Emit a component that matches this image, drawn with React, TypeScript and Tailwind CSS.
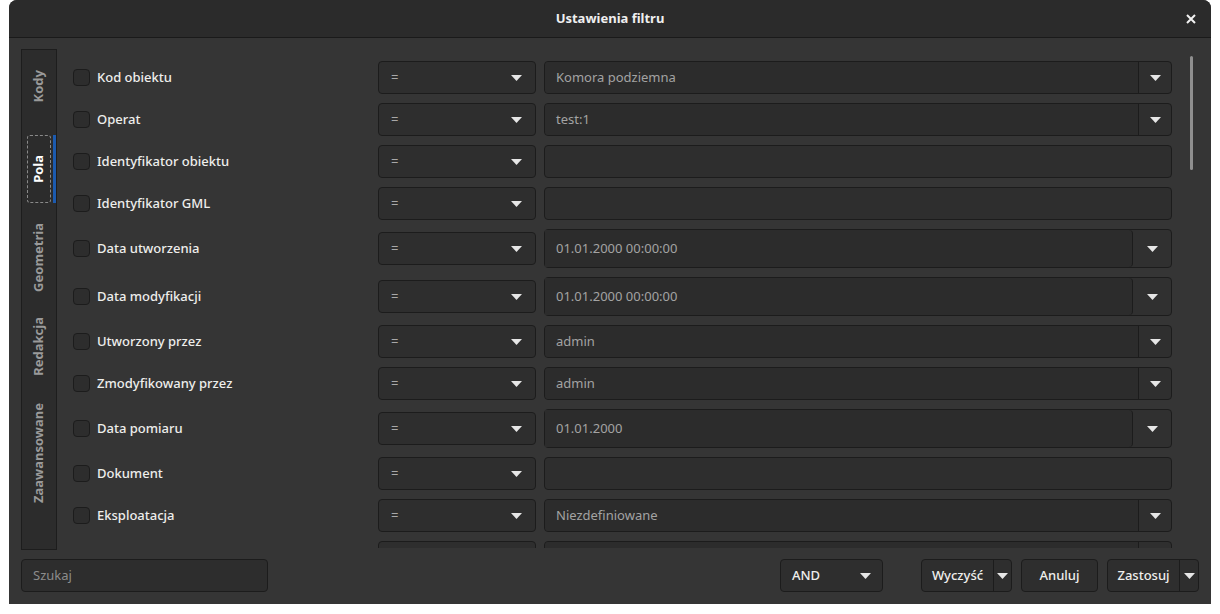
import React from 'react';

type Row = {
  label: string;
  kind: 'combo' | 'date' | 'edit';
  value?: string;
  partial?: boolean;
};

const rows: Row[] = [
  { label: 'Kod obiektu', kind: 'combo', value: 'Komora podziemna' },
  { label: 'Operat', kind: 'combo', value: 'test:1' },
  { label: 'Identyfikator obiektu', kind: 'edit' },
  { label: 'Identyfikator GML', kind: 'edit' },
  { label: 'Data utworzenia', kind: 'date', value: '01.01.2000 00:00:00' },
  { label: 'Data modyfikacji', kind: 'date', value: '01.01.2000 00:00:00' },
  { label: 'Utworzony przez', kind: 'combo', value: 'admin' },
  { label: 'Zmodyfikowany przez', kind: 'combo', value: 'admin' },
  { label: 'Data pomiaru', kind: 'date', value: '01.01.2000' },
  { label: 'Dokument', kind: 'edit' },
  { label: 'Eksploatacja', kind: 'combo', value: 'Niezdefiniowane' },
  // next row, only its top edge shows above the clip
  { label: '', kind: 'combo', value: '', partial: true },
];

const tabs = [
  { name: 'Kody', h: 'h-[85px] pb-[12px]' },
  { name: 'Pola', h: 'h-[68px]', active: true },
  { name: 'Geometria', h: 'h-[108px]' },
  { name: 'Redakcja', h: 'h-[70px]' },
  { name: 'Zaawansowane', h: 'h-[144px]' },
];

function Arrow() {
  return (
    <svg width="11" height="6" viewBox="0 0 11 6" className="shrink-0">
      <path d="M0 0 H11 L5.5 6 Z" fill="#e6e6e6" />
    </svg>
  );
}

function ValueField({ row }: { row: Row }) {
  if (row.kind === 'edit') {
    return <div className="w-[628px] h-[33px] rounded-[4px] border border-[#1c1c1c] bg-[#2e2e2e]" />;
  }
  if (row.kind === 'date') {
    return (
      <div className="w-[628px] h-[39px] rounded-[4px] border border-[#1c1c1c] bg-[#303030] flex">
        <div className="flex-1 flex items-center pl-[11px] bg-[#2c2c2c] rounded-r-[4px] border-r border-[#1c1c1c] text-[#a3a3a3]">
          {row.value}
        </div>
        <div className="w-[38px] flex items-center justify-center">
          <Arrow />
        </div>
      </div>
    );
  }
  return (
    <div className="w-[628px] h-[33px] rounded-[4px] border border-[#1c1c1c] bg-[#2f2f2f] flex">
      <div className="flex-1 flex items-center pl-[11px] bg-[#2c2c2c] rounded-l-[4px] border-r border-[#1c1c1c] text-[#a3a3a3]">
        {row.value}
      </div>
      <div className="w-[32px] flex items-center justify-center">
        {!row.partial && <Arrow />}
      </div>
    </div>
  );
}

export default function App() {
  return (
    <div
      className="w-[1220px] h-[614px] bg-white pl-[9px] text-[13px]"
      style={{ fontFamily: '"Noto Sans", "Open Sans", sans-serif' }}>
      <div className="w-[1202px] h-[604px] bg-[#353535] rounded-t-[8px] overflow-hidden flex flex-col">
        <div className="relative h-[38px] shrink-0 bg-[#2b2b2b] border-b border-[#1a1a1a] flex items-center justify-center">
          <span className="font-bold text-[#efefef]">Ustawienia filtru</span>
          <svg width="10" height="10" viewBox="0 0 10 10" className="absolute right-[15px] top-[14px]">
            <path d="M1 1 L9 9 M9 1 L1 9" stroke="#f2f2f2" strokeWidth="2" />
          </svg>
        </div>

        <div className="flex-1 flex flex-col px-[12px] pt-[11px] pb-[12px] gap-[9px]">
          <div className="relative h-[501px] flex">
            <div className="w-[36px] h-[501px] bg-[#2c2c2c] border border-[#1d1d1d] flex flex-col shrink-0">
              {tabs.map((t) => (
                <div key={t.name} className={`relative ${t.h} flex items-center justify-center`}>
                  {t.active && (
                    <>
                      <div className="absolute left-[5px] top-0 bottom-0 w-[24px] border border-dashed border-[#8a8a8a] rounded-[3px]" />
                      <div className="absolute right-0 top-0 bottom-0 w-[3px] bg-[#1c5bb0]" />
                    </>
                  )}
                  <span
                    className={`[writing-mode:vertical-rl] rotate-180 font-bold text-[13px] ${
                      t.active ? 'text-white' : 'text-[#9a9a9a]'
                    }`}>
                    {t.name}
                  </span>
                </div>
              ))}
            </div>

            <div className="mt-[12px] ml-[16px] h-[487px] overflow-hidden flex flex-col gap-[9px]">
              {rows.map((r, i) => (
                <div key={i} className="flex items-center shrink-0">
                  <div className="w-[305px] flex items-center gap-[7px]">
                    {!r.partial && (
                      <>
                        <div className="w-[17px] h-[17px] rounded-[4px] border border-[#1c1c1c] bg-[#2d2d2d]" />
                        <span className="font-medium text-[#eeeeec]">{r.label}</span>
                      </>
                    )}
                  </div>
                  <div className="w-[158px] h-[33px] rounded-[4px] border border-[#1c1c1c] bg-[#2e2e2e] flex items-center justify-between pl-[12px] pr-[13px] text-[#a8a8a8]">
                    {!r.partial && (
                      <>
                        <span>=</span>
                        <Arrow />
                      </>
                    )}
                  </div>
                  <div className="ml-[8px]">
                    <ValueField row={r} />
                  </div>
                </div>
              ))}
            </div>

            <div className="absolute right-[6px] top-[7px] w-[3px] h-[114px] rounded-full bg-[#8f8f8f]" />
          </div>

          <div className="h-[33px] flex items-center">
            <div className="w-[247px] h-[33px] rounded-[4px] border border-[#1c1c1c] bg-[#2d2d2d] flex items-center pl-[11px] text-[#8c8c8c]">
              Szukaj
            </div>
            <div className="flex-1" />
            <div className="w-[103px] h-[33px] rounded-[4px] border border-[#1c1c1c] bg-[#2e2e2e] flex items-center justify-between pl-[11px] pr-[11px] font-medium text-[#eeeeec]">
              <span>AND</span>
              <Arrow />
            </div>
            <div className="ml-[38px] w-[91px] h-[33px] rounded-[4px] border border-[#1c1c1c] bg-[#2e2e2e] flex font-medium text-[#eeeeec]">
              <div className="flex-1 flex items-center justify-center border-r border-[#1c1c1c]">Wyczyść</div>
              <div className="w-[17px] flex items-center justify-center">
                <Arrow />
              </div>
            </div>
            <div className="ml-[9px] w-[77px] h-[33px] rounded-[4px] border border-[#1c1c1c] bg-[#2e2e2e] flex items-center justify-center font-medium text-[#eeeeec]">
              Anuluj
            </div>
            <div className="ml-[9px] w-[92px] h-[33px] rounded-[4px] border border-[#1c1c1c] bg-[#2e2e2e] flex font-medium text-[#eeeeec]">
              <div className="flex-1 flex items-center justify-center border-r border-[#1c1c1c]">Zastosuj</div>
              <div className="w-[18px] flex items-center justify-center">
                <Arrow />
              </div>
            </div>
          </div>
        </div>
      </div>
    </div>
  );
}
